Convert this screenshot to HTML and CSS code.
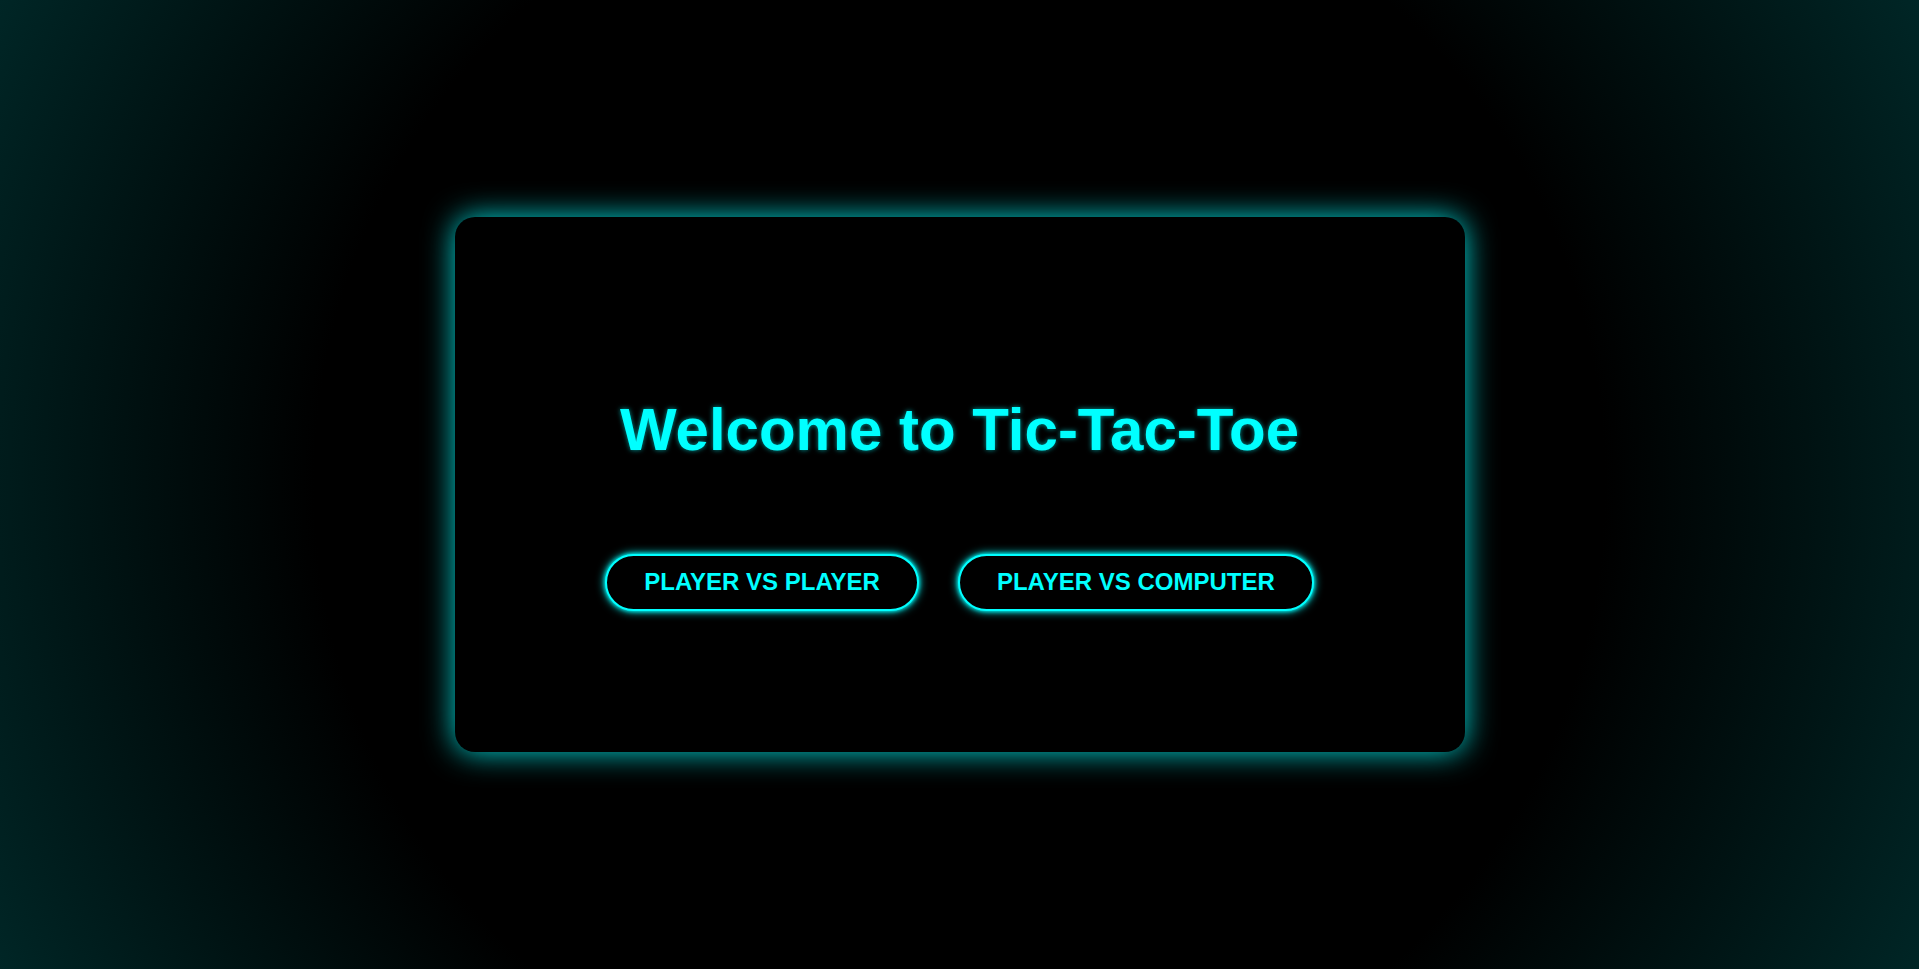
FILE: index.html
```html
<!DOCTYPE html>
<html lang="en">
<head>
<meta charset="UTF-8">
<title>Tic-Tac-Toe</title>
<link rel="stylesheet" href="styles.css">
</head>
<body>
<main class="screen">
  <section class="card">
    <h1 class="title">Welcome to Tic-Tac-Toe</h1>
    <div class="modes">
      <button class="mode-btn" type="button">PLAYER VS PLAYER</button>
      <button class="mode-btn" type="button">PLAYER VS COMPUTER</button>
    </div>
  </section>
</main>
</body>
</html>
```

FILE: styles.css
```css
html, body {
  margin: 0;
  padding: 0;
  height: 100%;
}

body {
  background: radial-gradient(circle, #000000 60%, #002626 100%);
  font-family: "Liberation Sans", Arial, sans-serif;
  color: #00ffff;
  overflow: hidden;
}

.screen {
  height: 100vh;
  display: flex;
  align-items: center;
  justify-content: center;
}

.card {
  width: 1010px;
  box-sizing: border-box;
  padding: 179px 0 141px;
  background: #000;
  border-radius: 20px;
  box-shadow: 0 0 30px rgba(0, 255, 255, 0.85);
  display: flex;
  flex-direction: column;
  align-items: center;
}

.title {
  margin: 0;
  font-size: 60px;
  line-height: 68px;
  font-weight: bold;
  color: #00ffff;
  text-shadow: 0 0 5px rgba(0, 255, 255, 0.6);
}

.modes {
  margin-top: 90px;
  display: flex;
  gap: 39px;
}

.mode-btn {
  font-family: "Liberation Sans", Arial, sans-serif;
  font-size: 24px;
  font-weight: bold;
  line-height: 27px;
  padding: 12px 37px 14px;
  color: #00ffff;
  background: #000;
  border: 2px solid #00ffff;
  border-radius: 30px;
  box-shadow: 0 0 10px #00ffff, 0 0 4px #00ffff;
  cursor: pointer;
}
```
